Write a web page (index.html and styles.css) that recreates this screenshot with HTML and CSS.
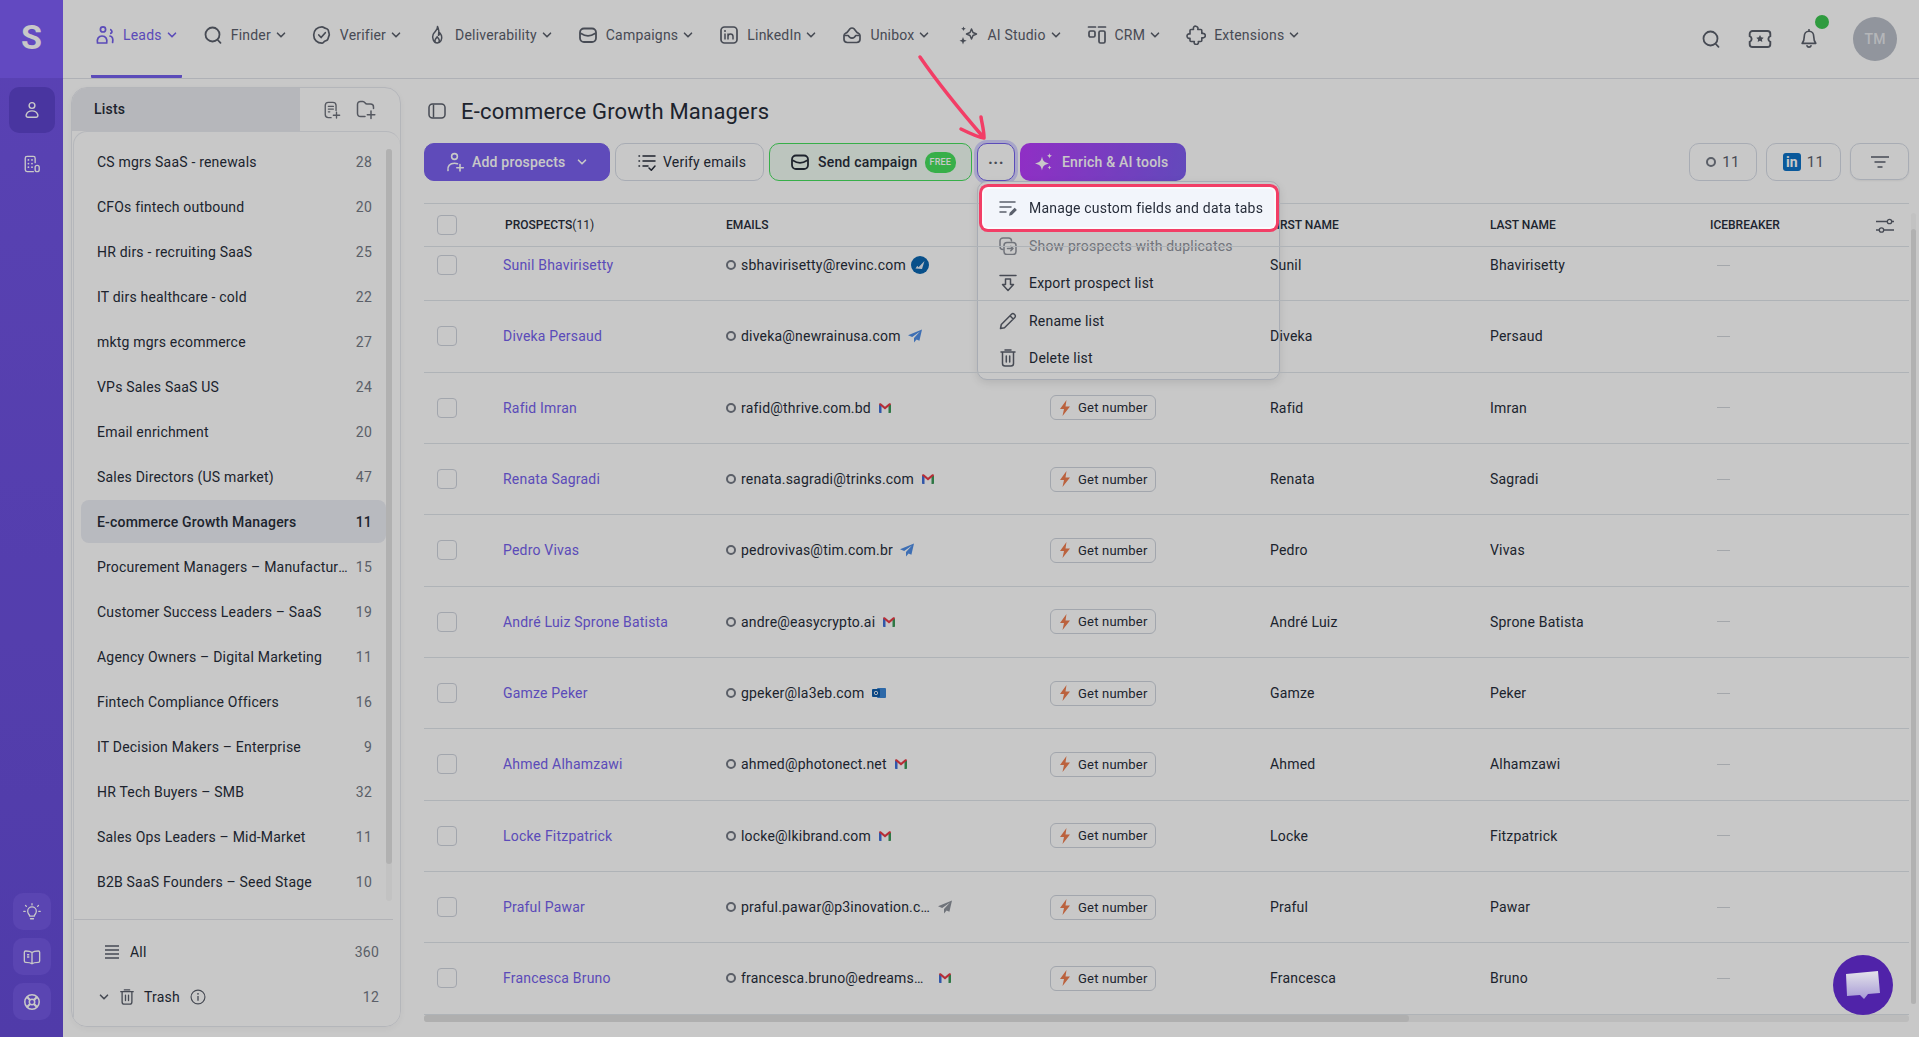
FILE: index.html
```html
<!DOCTYPE html>
<html lang="en">
<head>
<meta charset="UTF-8">
<meta name="viewport" content="width=device-width, initial-scale=1.0">
<title>Prospects</title>
<link rel="stylesheet" href="styles.css">
</head>
<body>

<!-- icon sprite -->
<svg class="sprite" xmlns="http://www.w3.org/2000/svg">
  <symbol id="i-chev" viewBox="0 0 10 10"><path d="M1.5 3.2 5 6.8l3.5-3.6" fill="none" stroke="currentColor" stroke-width="1.6" stroke-linecap="round" stroke-linejoin="round"/></symbol>
  <symbol id="i-leads" viewBox="0 0 20 20"><g fill="none" stroke="currentColor" stroke-width="1.7"><circle cx="8" cy="4.4" r="2.6"/><path d="M2.5 18c-.9-3.800 1-7 4.500-7 3.800 0 5.500 3 4.700 7z"/><path d="M15 8.500a1.900 1.900 0 1 0 0-3.800"/><path d="M15 11c2.500.3 3.300 3 2.600 6.500" stroke-linecap="round"/></g></symbol>
  <symbol id="i-search" viewBox="0 0 20 20"><g fill="none" stroke="currentColor" stroke-width="1.800" stroke-linecap="round"><circle cx="9.500" cy="9.500" r="7"/><path d="m14.800 15 2.700 2.800"/></g></symbol>
  <symbol id="i-check" viewBox="0 0 20 20"><g fill="none" stroke="currentColor" stroke-width="1.700" stroke-linecap="round" stroke-linejoin="round"><path d="M10 1.800c1.500 0 1.800 1 3 1.300 1.300.3 2.500.6 3.100 1.800.6 1.200.3 2 .9 3.100.5 1.100.3 2.500-.3 3.600-.5 1.100-.4 2-1.100 3-.8 1-1.900 1-3 1.700-1 .6-1.400 1.900-2.600 1.900-4.800 0-8.300-3.600-8.300-8.200s3.500-8.200 8.300-8.200z"/><path d="m6.800 10 2.300 2.500 4.200-4.800"/></g></symbol>
  <symbol id="i-flame" viewBox="0 0 20 20"><path d="M10.500 1.500c.6 3-3 5-4.300 7.800-1.500 3.400.4 8.700 4 8.700 3.500 0 5.300-3.800 4.300-7.200-.4-1.300-1.200-2.500-2-3.300.1 1.400-.3 2.300-1 2.800.6-2.800.3-6.300-1-8.800zM10.200 18c-1.700 0-2.600-1.500-2.100-3 .4-1.200 1.500-2 2-3.200.9 1.100 2.100 2.300 2.200 3.700.1 1.300-.8 2.500-2.100 2.500z" fill="none" stroke="currentColor" stroke-width="1.500" stroke-linejoin="round"/></symbol>
  <symbol id="i-mail" viewBox="0 0 20 20"><g fill="none" stroke="currentColor" stroke-width="1.800" stroke-linejoin="round"><rect x="2" y="3.500" width="16" height="13.500" rx="4"/><path d="M2.500 8.200c2.500 1.500 5 2.700 7.500 2.700s5-1.200 7.500-2.700"/></g></symbol>
  <symbol id="i-linkedin" viewBox="0 0 20 20"><rect x="2" y="2" width="16" height="16" rx="3.500" fill="none" stroke="currentColor" stroke-width="1.700"/><path d="M6 8.500v6M9 14.500v-6M9 11.500c0-3.500 5-3.500 5 0v3" fill="none" stroke="currentColor" stroke-width="1.500"/><circle cx="6" cy="6" r="1" fill="currentColor"/></symbol>
  <symbol id="i-inbox" viewBox="0 0 20 20"><g fill="none" stroke="currentColor" stroke-width="1.700" stroke-linejoin="round"><path d="M5 7.500 8 3.800c1-1.100 3-1.100 4 0L15 7.500c1.500 1 3 1.400 3 3v3.800c0 2-1.500 3.200-3.400 3.200H5.400C3.500 17.500 2 16.300 2 14.300v-3.800c0-1.600 1.500-2 3-3z"/><path d="M2.300 10.500h4c.8 2 1.900 2.600 3.700 2.600s2.900-.6 3.700-2.600h4"/></g></symbol>
  <symbol id="i-sparkle" viewBox="0 0 20 20"><g fill="none" stroke="currentColor" stroke-width="1.500" stroke-linejoin="round"><path d="m12.500 4 1.500 3.500L17.500 9 14 10.500 12.500 14 11 10.500 7.500 9 11 7.500z"/></g><path d="m4 12 1 2.700 2.700 1L5 16.800 4 19.500 3 16.800.5 15.700 3 14.700zM4.500 1.500l.7 1.600 1.600.7-1.600.7-.7 1.600-.7-1.600-1.600-.7 1.600-.7z" fill="currentColor"/></symbol>
  <symbol id="i-crm" viewBox="0 0 20 20"><g fill="none" stroke="currentColor" stroke-width="1.700"><path d="M1.500 2h7M11.500 2h7" stroke-linecap="round"/><rect x="2" y="6" width="6" height="6" rx="1.500"/><rect x="12" y="6" width="6" height="12" rx="1.500"/></g></symbol>
  <symbol id="i-puzzle" viewBox="0 0 20 20"><path d="M7.500 4.500c-.6-2.500 1-3.500 2.300-3.300 1.500.2 2.600 1.400 2 3.300h3c.7 0 1 .4 1 1v3c2-.6 3.500.6 3.500 2.100s-1.500 2.700-3.500 2.100v2.800c0 .7-.4 1-1 1h-2.500c.5 2-.7 3-2 3s-2.600-1-2-3H5c-.6 0-1-.4-1-1v-2.300c-2 .6-3-.8-3-2.100s1-2.700 3-2.100V5.500c0-.7.400-1 1-1z" fill="none" stroke="currentColor" stroke-width="1.600" stroke-linejoin="round"/></symbol>
  <symbol id="i-ticket" viewBox="0 0 24 20"><path d="M4.500 2h15c1.600 0 2.800 1.200 2.800 2.800v2.400a3 3 0 0 0 0 5.600v2.400c0 1.600-1.200 2.800-2.800 2.800h-15c-1.600 0-2.800-1.200-2.800-2.800v-2.400a3 3 0 0 0 0-5.600V4.800C1.700 3.200 2.900 2 4.500 2z" fill="none" stroke="currentColor" stroke-width="1.900"/><path d="m12 6 1.200 2.300 2.500.4-1.800 1.800.4 2.500-2.300-1.200-2.300 1.200.4-2.500-1.800-1.800 2.500-.4z" fill="currentColor"/></symbol>
  <symbol id="i-bell" viewBox="0 0 20 22"><path d="M10 2.500c-3.400 0-5.200 2.700-5.200 5.800 0 3.700-.8 5.700-2.300 7.500h15c-1.500-1.800-2.300-3.800-2.300-7.500 0-3.100-1.800-5.800-5.200-5.800zM10 .8v1.700M7.800 18.500c.5 2 3.900 2 4.400 0" fill="none" stroke="currentColor" stroke-width="1.800" stroke-linejoin="round" stroke-linecap="round"/></symbol>
  <symbol id="i-person" viewBox="0 0 20 20"><g fill="none" stroke="currentColor" stroke-width="1.600"><circle cx="10" cy="5" r="3.200"/><path d="M5.200 18c-1.700 0-2-1.600-1.500-3 .9-2.400 3.300-4 6.300-4s5.400 1.600 6.300 4c.5 1.400.2 3-1.500 3z"/></g></symbol>
  <symbol id="i-building" viewBox="0 0 20 20"><g fill="none" stroke="currentColor" stroke-width="1.500" stroke-linecap="round"><path d="M11.500 18.500H4.500c-1.200 0-2-.8-2-2V3.500c0-1.200.8-2 2-2h7c1.200 0 2 .8 2 2v5"/><path d="M6 5.500h.01M10 5.500h.01M6 9.500h.01M10 9.500h.01M6 13.500h.01M10 13.500h.01" stroke-width="2"/><rect x="13.500" y="11.500" width="4.500" height="7" rx="2.200"/></g></symbol>
  <symbol id="i-bulb" viewBox="0 0 20 20"><g fill="none" stroke="currentColor" stroke-width="1.400" stroke-linecap="round"><path d="M7.500 14.500c0-1.500-2.300-2.300-2.300-5.300a4.800 4.800 0 0 1 9.600 0c0 3-2.300 3.800-2.300 5.300z"/><path d="M8.300 17.500h3.400M10 .8v1.400M2.800 2.800l1 1M17.200 2.800l-1 1M.8 9.200h1.700M17.500 9.200h1.700"/></g></symbol>
  <symbol id="i-book" viewBox="0 0 20 20"><g fill="none" stroke="currentColor" stroke-width="1.500" stroke-linejoin="round"><path d="M10 5c-1.500-1.300-3.500-1.700-7-1.700-.8 0-1.500.6-1.500 1.500v9.700c0 .9.700 1.500 1.500 1.500 3.500 0 5.500.3 7 1.500 1.500-1.200 3.500-1.500 7-1.500.8 0 1.500-.6 1.500-1.500V4.800c0-.9-.7-1.500-1.500-1.500-3.500 0-5.500.4-7 1.700zM10 5v12"/><path d="M4.500 7.500h2.500M4.500 10h2.500"/></g></symbol>
  <symbol id="i-help" viewBox="0 0 20 20"><g fill="none" stroke="currentColor" stroke-width="1.700"><circle cx="10" cy="10" r="8"/><circle cx="10" cy="10" r="3"/><path d="m4.500 4.500 3.300 3.300M15.500 4.500l-3.300 3.300M4.500 15.500l3.300-3.300M15.500 15.500l-3.300-3.300" stroke-width="2.400"/></g></symbol>
  <symbol id="i-list-add" viewBox="0 0 20 20"><g fill="none" stroke="currentColor" stroke-width="1.500" stroke-linecap="round" stroke-linejoin="round"><path d="M9 18.500H6c-2 0-3.500-1.500-3.500-3.500V5C2.500 3 4 1.500 6 1.500h5c2 0 3.500 1.500 3.500 3.500v5.500"/><path d="M6 6h5.500M6 9h5.500M6 12h1.500M15 12.500v6.500M11.500 15.800h7"/></g></symbol>
  <symbol id="i-folder-add" viewBox="0 0 20 20"><g fill="none" stroke="currentColor" stroke-width="1.500" stroke-linecap="round" stroke-linejoin="round"><path d="M9 16.500H4.500c-1.800 0-3-1.200-3-3v-9c0-1.800 1.200-3 3-3h2.300c1 0 1.600.4 2.200 1.300.5.700 1 1.200 2 1.200h3.500c1.800 0 3 1.200 3 3v1.500"/><path d="M15 11v7.500M11.300 14.800h7.500"/></g></symbol>
  <symbol id="i-panel" viewBox="0 0 18 16"><g fill="none" stroke="currentColor" stroke-width="1.500"><rect x="1" y="1" width="16" height="14" rx="3.500"/><path d="M5.500 1.500v13"/></g></symbol>
  <symbol id="i-add-user" viewBox="0 0 20 20"><g fill="none" stroke="currentColor" stroke-width="1.600" stroke-linecap="round"><circle cx="9.500" cy="4.500" r="2.900"/><path d="M3 18.500c-.8-4.300 1.800-7.300 6.500-7.300 1.200 0 2.200.2 3 .5M15 12.500v6.500M11.800 15.800h6.500"/></g></symbol>
  <symbol id="i-verify" viewBox="0 0 20 20"><g fill="none" stroke="currentColor" stroke-width="1.500" stroke-linecap="round" stroke-linejoin="round"><path d="M2 4h.5M6 4h12M2 9h.5M6 9h12M2 14h.5M6 14h5"/><path d="m12 16 2.300 2.300L18 14"/></g></symbol>
  <symbol id="i-stars" viewBox="0 0 20 20"><path d="M8 4.500c.8 4.500 2.300 6 7 7-4.700 1-6.200 2.500-7 7-.8-4.500-2.300-6-7-7 4.700-1 6.200-2.500 7-7zM15.500 1c.3 1.800.9 2.400 2.800 2.800-1.900.4-2.500 1-2.800 2.800-.3-1.800-.9-2.400-2.800-2.800 1.900-.4 2.500-1 2.800-2.800zM15.500 13.500c.3 1.300.7 1.700 2 2-1.300.3-1.700.7-2 2-.3-1.300-.7-1.700-2-2 1.300-.3 1.700-.7 2-2z" fill="currentColor"/></symbol>
  <symbol id="i-filter" viewBox="0 0 18 12"><path d="M0 1h18M3.500 6h11M6.500 11h5" fill="none" stroke="currentColor" stroke-width="1.700"/></symbol>
  <symbol id="i-sliders" viewBox="0 0 18 16"><g fill="none" stroke="currentColor" stroke-width="1.300"><path d="M0 3.500h11M16 3.500h2M0 12h3M8 12h10"/><circle cx="13.500" cy="3.500" r="2.200"/><circle cx="5.500" cy="12" r="2.200"/></g></symbol>
  <symbol id="i-edit-list" viewBox="0 0 18 18"><g fill="none" stroke="currentColor" stroke-width="1.500" stroke-linecap="round"><path d="M1 3h15M1 8h11M1 13h6"/></g><path d="m10 16.800.7-3 5-5 2.200 2.200-5 5z" fill="currentColor"/></symbol>
  <symbol id="i-dupes" viewBox="0 0 18 18"><g fill="none" stroke="currentColor" stroke-width="1.500" stroke-linejoin="round" stroke-linecap="round"><path d="M4 12.500c-1.600 0-3-1.100-3-3V4C1 2.200 2.400 1 4 1h5.500c1.700 0 3 1.200 3 3"/><rect x="5" y="5.500" width="12" height="12" rx="3"/><path d="M8.500 11.500h5.500M11.800 9.300l2.200 2.200-2.200 2.200"/></g></symbol>
  <symbol id="i-export" viewBox="0 0 18 18"><path d="M1 1.500h16M6.500 5h5v5.500h3L9 16.500 3.500 10.500h3z" fill="none" stroke="currentColor" stroke-width="1.500" stroke-linejoin="round" stroke-linecap="round"/></symbol>
  <symbol id="i-pencil" viewBox="0 0 18 18"><path d="M1.500 16.500l.8-4L12.500 2.200c.8-.8 2-.8 2.800 0l.5.500c.8.8.8 2 0 2.800L5.500 15.700zM11 3.800 14.200 7" fill="none" stroke="currentColor" stroke-width="1.500" stroke-linejoin="round"/></symbol>
  <symbol id="i-trash" viewBox="0 0 16 18"><path d="M1 3h14M5 1h6M2.500 3v11.500c0 1.500 1 2.500 2.500 2.500h6c1.500 0 2.500-1 2.500-2.500V3M6.300 7v6M9.700 7v6" fill="none" stroke="currentColor" stroke-width="1.500" stroke-linecap="round"/></symbol>
  <symbol id="i-rows" viewBox="0 0 14 14"><path d="M0 1h14M0 5h14M0 9h14M0 13h14" fill="none" stroke="currentColor" stroke-width="1.500"/></symbol>
  <symbol id="i-info" viewBox="0 0 18 18"><g fill="none" stroke="currentColor" stroke-width="1.300"><circle cx="9" cy="9" r="7.800"/><path d="M9 8v5.200" stroke-width="1.500"/></g><circle cx="9" cy="5.400" r="1" fill="currentColor"/></symbol>
  <symbol id="i-bolt" viewBox="0 0 12 16"><path d="M7.500 0 1 9h4l-1.500 7L11 6.500H6.500z" fill="#ef7d4f"/></symbol>
  <symbol id="i-verified" viewBox="0 0 18 18"><circle cx="9" cy="9" r="9" fill="#0b66b0"/><path d="m4.500 12.500 1.800-2.800 1.200 1.500L13.500 5l-2.500 8z" fill="#e6edf6"/></symbol>
  <symbol id="i-plane" viewBox="0 0 14 14"><path d="M14 .5 0 6.300l4.200 1.800L12 2.500 6 9v4.500l2.600-3 2.800 1.300z" fill="currentColor"/></symbol>
  <symbol id="i-gmail" viewBox="0 0 12 10"><path d="M0 1.500h2.500V10H.8C.3 10 0 9.600 0 9.200z" fill="#3f6fd8"/><path d="M9.500 1.500H12v7.700c0 .4-.3.800-.8.800H9.500z" fill="#3c9a5a"/><path d="M0 1.500C0 .3 1.300-.2 2.100.5L6 3.700 9.900.5c.8-.7 2.100-.2 2.100 1L6 6.500z" fill="#ea3b46"/></symbol>
  <symbol id="i-outlook" viewBox="0 0 14 12"><rect x="5" y="1" width="9" height="10" rx="1" fill="#3b86d6"/><rect x="0" y="2" width="8" height="8" rx="1" fill="#0f5ba8"/><circle cx="4" cy="6" r="1.700" fill="none" stroke="#dfe8f3" stroke-width="1"/></symbol>
</svg>

<aside class="sidebar">
  <div class="logo">S</div>
  <div class="side-nav">
    <a class="side-btn active"><svg class="ico18"><use href="#i-person"/></svg></a>
    <a class="side-btn"><svg class="ico18"><use href="#i-building"/></svg></a>
  </div>
  <div class="side-bottom">
    <a class="side-help"><svg class="ico18"><use href="#i-bulb"/></svg></a>
    <a class="side-help"><svg class="ico18"><use href="#i-book"/></svg></a>
    <a class="side-help"><svg class="ico18"><use href="#i-help"/></svg></a>
  </div>
</aside>

<div class="main">
  <header class="topbar">
    <nav class="top-nav">
      <a class="nav-item active"><svg class="ico20"><use href="#i-leads"/></svg>Leads<svg class="chev"><use href="#i-chev"/></svg></a>
      <a class="nav-item"><svg class="ico20"><use href="#i-search"/></svg>Finder<svg class="chev"><use href="#i-chev"/></svg></a>
      <a class="nav-item"><svg class="ico20"><use href="#i-check"/></svg>Verifier<svg class="chev"><use href="#i-chev"/></svg></a>
      <a class="nav-item"><svg class="ico20"><use href="#i-flame"/></svg>Deliverability<svg class="chev"><use href="#i-chev"/></svg></a>
      <a class="nav-item"><svg class="ico20"><use href="#i-mail"/></svg>Campaigns<svg class="chev"><use href="#i-chev"/></svg></a>
      <a class="nav-item"><svg class="ico20"><use href="#i-linkedin"/></svg>LinkedIn<svg class="chev"><use href="#i-chev"/></svg></a>
      <a class="nav-item"><svg class="ico20"><use href="#i-inbox"/></svg>Unibox<svg class="chev"><use href="#i-chev"/></svg></a>
      <a class="nav-item nav-ai"><svg class="ico20"><use href="#i-sparkle"/></svg>AI Studio<svg class="chev"><use href="#i-chev"/></svg></a>
      <a class="nav-item"><svg class="ico20"><use href="#i-crm"/></svg>CRM<svg class="chev"><use href="#i-chev"/></svg></a>
      <a class="nav-item"><svg class="ico20"><use href="#i-puzzle"/></svg>Extensions<svg class="chev"><use href="#i-chev"/></svg></a>
    </nav>
    <div class="top-right">
      <a class="top-icon"><svg class="ico20"><use href="#i-search"/></svg></a>
      <a class="top-icon"><svg class="ico24"><use href="#i-ticket"/></svg></a>
      <a class="top-icon bell"><svg class="ico20"><use href="#i-bell"/></svg><span class="bell-dot"></span></a>
      <div class="avatar">TM</div>
    </div>
  </header>

  <div class="content">
    <section class="lists-panel">
      <div class="lists-head">
        <div class="lists-tab">Lists</div>
        <a class="head-icon"><svg class="ico18"><use href="#i-list-add"/></svg></a>
        <a class="head-icon"><svg class="ico20"><use href="#i-folder-add"/></svg></a>
      </div>
      <div class="lists-card">
        <div class="lists-scroll">
          <ul class="lists">
            <li><span class="list-name">CS mgrs SaaS - renewals</span><span class="list-count">28</span></li>
            <li><span class="list-name">CFOs fintech outbound</span><span class="list-count">20</span></li>
            <li><span class="list-name">HR dirs - recruiting SaaS</span><span class="list-count">25</span></li>
            <li><span class="list-name">IT dirs healthcare - cold</span><span class="list-count">22</span></li>
            <li><span class="list-name">mktg mgrs ecommerce</span><span class="list-count">27</span></li>
            <li><span class="list-name">VPs Sales SaaS US</span><span class="list-count">24</span></li>
            <li><span class="list-name">Email enrichment</span><span class="list-count">20</span></li>
            <li><span class="list-name">Sales Directors (US market)</span><span class="list-count">47</span></li>
            <li class="selected"><span class="list-name">E-commerce Growth Managers</span><span class="list-count">11</span></li>
            <li><span class="list-name">Procurement Managers – Manufacturing</span><span class="list-count">15</span></li>
            <li><span class="list-name">Customer Success Leaders – SaaS</span><span class="list-count">19</span></li>
            <li><span class="list-name">Agency Owners – Digital Marketing</span><span class="list-count">11</span></li>
            <li><span class="list-name">Fintech Compliance Officers</span><span class="list-count">16</span></li>
            <li><span class="list-name">IT Decision Makers – Enterprise</span><span class="list-count">9</span></li>
            <li><span class="list-name">HR Tech Buyers – SMB</span><span class="list-count">32</span></li>
            <li><span class="list-name">Sales Ops Leaders – Mid-Market</span><span class="list-count">11</span></li>
            <li><span class="list-name">B2B SaaS Founders – Seed Stage</span><span class="list-count">10</span></li>
          </ul>
          <div class="lists-bar"><div class="lists-thumb"></div></div>
        </div>
        <div class="lists-foot">
          <div class="foot-row foot-all"><svg class="ico14"><use href="#i-rows"/></svg><span class="foot-label">All</span><span class="foot-count">360</span></div>
          <div class="foot-row foot-trash"><svg class="chev"><use href="#i-chev"/></svg><svg class="ico16"><use href="#i-trash"/></svg><span>Trash</span><svg class="ico16 foot-info"><use href="#i-info"/></svg><span class="foot-count">12</span></div>
        </div>
      </div>
    </section>

    <section class="prospects">
      <div class="title-row">
        <svg class="title-icon"><use href="#i-panel"/></svg>
        <h1>E-commerce Growth Managers</h1>
      </div>

      <div class="toolbar">
        <button class="btn btn-primary"><svg class="ico20"><use href="#i-add-user"/></svg>Add prospects<svg class="chev chev-btn"><use href="#i-chev"/></svg></button>
        <button class="btn btn-verify"><svg class="ico20"><use href="#i-verify"/></svg>Verify emails</button>
        <button class="btn btn-send"><svg class="ico20"><use href="#i-mail"/></svg>Send campaign<span class="free">FREE</span></button>
        <div class="more-wrap">
          <button class="btn btn-more">···</button>
          <div class="menu">
            <div class="menu-item highlight"><svg class="ico18"><use href="#i-edit-list"/></svg>Manage custom fields and data tabs</div>
            <div class="menu-item disabled"><svg class="ico18"><use href="#i-dupes"/></svg>Show prospects with duplicates</div>
            <div class="menu-item"><svg class="ico18"><use href="#i-export"/></svg>Export prospect list</div>
            <div class="menu-item"><svg class="ico18"><use href="#i-pencil"/></svg>Rename list</div>
            <div class="menu-item"><svg class="ico18"><use href="#i-trash"/></svg>Delete list</div>
          </div>
        </div>
        <button class="btn btn-enrich"><svg class="ico20"><use href="#i-stars"/></svg>Enrich &amp; AI tools</button>
        <button class="btn btn-count count-email"><span class="status"></span>11</button>
        <button class="btn btn-count count-li"><span class="li-logo">in</span>11</button>
        <button class="btn btn-filter"><svg class="filter-ico"><use href="#i-filter"/></svg></button>
      </div>

      <div class="table">
        <div class="thead row-grid">
          <span class="check"></span>
          <span class="th-first">PROSPECTS<em>(11)</em></span>
          <span>EMAILS</span>
          <span></span>
          <span>FIRST NAME</span>
          <span>LAST NAME</span>
          <span>ICEBREAKER</span>
          <svg class="sliders"><use href="#i-sliders"/></svg>
        </div>
        <div class="tbody">
          <div class="row row-grid"><span class="check"></span><a class="name">Sunil Bhavirisetty</a><span class="email"><span class="status"></span><span class="addr">sbhavirisetty@revinc.com</span><svg class="ico18 m-verified"><use href="#i-verified"/></svg></span><span></span><span>Sunil</span><span>Bhavirisetty</span><span class="dash"></span></div>
          <div class="row row-grid"><span class="check"></span><a class="name">Diveka Persaud</a><span class="email"><span class="status"></span><span class="addr">diveka@newrainusa.com</span><svg class="ico14 m-plane"><use href="#i-plane"/></svg></span><span></span><span>Diveka</span><span>Persaud</span><span class="dash"></span></div>
          <div class="row row-grid"><span class="check"></span><a class="name">Rafid Imran</a><span class="email"><span class="status"></span><span class="addr">rafid@thrive.com.bd</span><svg class="m-gmail"><use href="#i-gmail"/></svg></span><a class="get-num"><svg class="bolt"><use href="#i-bolt"/></svg>Get number</a><span>Rafid</span><span>Imran</span><span class="dash"></span></div>
          <div class="row row-grid"><span class="check"></span><a class="name">Renata Sagradi</a><span class="email"><span class="status"></span><span class="addr">renata.sagradi@trinks.com</span><svg class="m-gmail"><use href="#i-gmail"/></svg></span><a class="get-num"><svg class="bolt"><use href="#i-bolt"/></svg>Get number</a><span>Renata</span><span>Sagradi</span><span class="dash"></span></div>
          <div class="row row-grid"><span class="check"></span><a class="name">Pedro Vivas</a><span class="email"><span class="status"></span><span class="addr">pedrovivas@tim.com.br</span><svg class="ico14 m-plane"><use href="#i-plane"/></svg></span><a class="get-num"><svg class="bolt"><use href="#i-bolt"/></svg>Get number</a><span>Pedro</span><span>Vivas</span><span class="dash"></span></div>
          <div class="row row-grid"><span class="check"></span><a class="name">André Luiz Sprone Batista</a><span class="email"><span class="status"></span><span class="addr">andre@easycrypto.ai</span><svg class="m-gmail"><use href="#i-gmail"/></svg></span><a class="get-num"><svg class="bolt"><use href="#i-bolt"/></svg>Get number</a><span>André Luiz</span><span>Sprone Batista</span><span class="dash"></span></div>
          <div class="row row-grid"><span class="check"></span><a class="name">Gamze Peker</a><span class="email"><span class="status"></span><span class="addr">gpeker@la3eb.com</span><svg class="m-outlook"><use href="#i-outlook"/></svg></span><a class="get-num"><svg class="bolt"><use href="#i-bolt"/></svg>Get number</a><span>Gamze</span><span>Peker</span><span class="dash"></span></div>
          <div class="row row-grid"><span class="check"></span><a class="name">Ahmed Alhamzawi</a><span class="email"><span class="status"></span><span class="addr">ahmed@photonect.net</span><svg class="m-gmail"><use href="#i-gmail"/></svg></span><a class="get-num"><svg class="bolt"><use href="#i-bolt"/></svg>Get number</a><span>Ahmed</span><span>Alhamzawi</span><span class="dash"></span></div>
          <div class="row row-grid"><span class="check"></span><a class="name">Locke Fitzpatrick</a><span class="email"><span class="status"></span><span class="addr">locke@lkibrand.com</span><svg class="m-gmail"><use href="#i-gmail"/></svg></span><a class="get-num"><svg class="bolt"><use href="#i-bolt"/></svg>Get number</a><span>Locke</span><span>Fitzpatrick</span><span class="dash"></span></div>
          <div class="row row-grid"><span class="check"></span><a class="name">Praful Pawar</a><span class="email"><span class="status"></span><span class="addr">praful.pawar@p3inovation.com</span><svg class="ico14 m-plane gray"><use href="#i-plane"/></svg></span><a class="get-num"><svg class="bolt"><use href="#i-bolt"/></svg>Get number</a><span>Praful</span><span>Pawar</span><span class="dash"></span></div>
          <div class="row row-grid"><span class="check"></span><a class="name">Francesca Bruno</a><span class="email"><span class="status"></span><span class="addr">francesca.bruno@edreamsolutions.com</span><svg class="m-gmail"><use href="#i-gmail"/></svg></span><a class="get-num"><svg class="bolt"><use href="#i-bolt"/></svg>Get number</a><span>Francesca</span><span>Bruno</span><span class="dash"></span></div>
        </div>
        <div class="hbar"><div class="hthumb"></div></div>
        <div class="vbar"><div class="vthumb"></div></div>
      </div>
    </section>
  </div>
</div>

<div class="dim"></div>

<!-- annotation arrow over the dimmed page -->
<svg class="arrow" viewBox="0 0 80 100" width="80" height="100">
  <path d="M5 7C25 36 50 66 69 88M46 79C54 83 62 87 69 88C69 80 67 74 66 67" fill="none" stroke="#f23e66" stroke-width="3.500" stroke-linecap="round" stroke-linejoin="round"/>
</svg>

<a class="chat">
  <svg width="36" height="30" viewBox="0 0 36 30"><defs><linearGradient id="chat-fill" x1="0" y1="0" x2="0" y2="1"><stop offset="0" stop-color="#e4e4ea"/><stop offset="1" stop-color="#a79ad6"/></linearGradient></defs><path d="M1 4 33 1l2 22-12 1-4 5-4-4-13 1z" fill="url(#chat-fill)"/></svg>
</a>

</body>
</html>
```

FILE: styles.css
```css
* {
  box-sizing: border-box;
}

html, body {
  height: 100%;
}

body {
  margin: 0;
  height: 1037px;
  overflow: hidden;
  display: flex;
  font-family: Roboto, "Liberation Sans", sans-serif;
  font-size: 14px;
  letter-spacing: 0.2px;
  color: #272d3a;
  background: #fff;
}

ul {
  list-style: none;
  margin: 0;
  padding: 0;
}

button {
  font-family: inherit;
  letter-spacing: inherit;
  cursor: pointer;
}

.sprite {
  display: none;
}

.ico14 { width: 14px; height: 14px; flex: none; }
.ico16 { width: 16px; height: 16px; flex: none; }
.ico18 { width: 18px; height: 18px; flex: none; }
.ico20 { width: 20px; height: 20px; flex: none; }
.ico24 { width: 24px; height: 24px; flex: none; }
.chev { width: 10px; height: 10px; flex: none; }

/* left rail */
.sidebar {
  width: 63px;
  flex: none;
  display: flex;
  flex-direction: column;
  align-items: center;
  background: linear-gradient(180deg, #7355e5, #664cd8);
  color: #fff;
}

.logo {
  width: 100%;
  height: 78px;
  flex: none;
  display: flex;
  align-items: center;
  justify-content: center;
  background: #7d5df7;
  font-size: 34px;
  font-weight: 700;
  color: #fff;
  padding-bottom: 4px;
}

.side-nav {
  display: flex;
  flex-direction: column;
  gap: 8px;
  padding-top: 9px;
  flex: 1;
}

.side-btn {
  width: 46px;
  height: 46px;
  display: flex;
  align-items: center;
  justify-content: center;
  border-radius: 10px;
}

.side-btn.active {
  background: #5e44cc;
}

.side-bottom {
  display: flex;
  flex-direction: column;
  gap: 8px;
  padding-bottom: 17px;
}

.side-help {
  width: 38px;
  height: 37px;
  display: flex;
  align-items: center;
  justify-content: center;
  border-radius: 10px;
  background: #7358e3;
}

.main {
  flex: 1;
  min-width: 0;
  display: flex;
  flex-direction: column;
}

/* top bar */
.topbar {
  height: 79px;
  flex: none;
  display: flex;
  align-items: stretch;
  border-bottom: 1px solid #dfe2e8;
  padding-right: 22px;
}

.top-nav {
  display: flex;
  gap: 17px;
  padding-left: 28px;
}

.nav-item {
  display: flex;
  align-items: center;
  gap: 8px;
  padding: 0 5px 6px 4px;
  height: 78px;
  color: #5b606c;
  border-bottom: 3px solid transparent;
}

.nav-item .chev {
  margin-left: -3px;
}

.nav-item.active {
  color: #7460ec;
  border-bottom-color: #7460ec;
  border-radius: 0 0 1px 1px;
}

.nav-ai {
  margin-left: 4px;
}

.top-right {
  margin-left: auto;
  display: flex;
  align-items: center;
  gap: 25px;
  color: #5b606c;
}

.top-icon {
  width: 24px;
  height: 24px;
  display: flex;
  align-items: center;
  justify-content: center;
  position: relative;
}

.bell-dot {
  position: absolute;
  top: -12px;
  left: 18px;
  width: 14px;
  height: 14px;
  border-radius: 50%;
  background: #3dc651;
}

.avatar {
  width: 44px;
  height: 44px;
  margin-left: 7px;
  border-radius: 50%;
  background: #b9bec8;
  color: #e6e8ec;
  font-weight: 500;
  font-size: 14px;
  display: flex;
  align-items: center;
  justify-content: center;
}

.content {
  flex: 1;
  min-height: 0;
  display: flex;
  padding: 8px 10px 0 8px;
}

/* lists panel */
.lists-panel {
  width: 330px;
  height: 940px;
  flex: none;
  display: flex;
  flex-direction: column;
  border: 1px solid #e6e8ee;
  border-radius: 16px;
  box-shadow: 0 2px 6px rgba(0, 0, 0, 0.04);
  overflow: hidden;
}

.lists-head {
  height: 43px;
  flex: none;
  display: flex;
  align-items: center;
  gap: 15px;
  padding-right: 24px;
  position: relative;
}

.lists-tab {
  flex: 1;
  align-self: stretch;
  margin-right: 8px;
  padding-left: 22px;
  display: flex;
  align-items: center;
  font-weight: 500;
  background: #e9eaef;
  clip-path: polygon(0 0, 229px 0, 234px 5px, 238px 13px, 243px 26px, 249px 36px, 258px 43px, 0 43px);
  padding-bottom: 1px;
}

.head-icon {
  color: #6d717b;
  display: flex;
}

.lists-card {
  flex: 1;
  min-height: 0;
  margin: 0 0 0 1px;
  display: flex;
  flex-direction: column;
  background: #fff;
  border: 1px solid #e9ebf0;
  border-width: 1px 0 0 1px;
  border-radius: 14px 14px 0 0;
}

.lists-scroll {
  height: 788px;
  flex: none;
  position: relative;
  overflow: hidden;
  padding: 8px 0 0 7px;
  border-bottom: 1px solid #e3e5ea;
  margin-right: 7px;
}

.lists li {
  width: 305px;
  height: 43px;
  margin-bottom: 2.06px;
  padding: 0 14px 0 16px;
  display: flex;
  align-items: center;
  justify-content: space-between;
  border-radius: 8px;
}

.lists li.selected {
  background: #ebedf4;
  font-weight: 500;
}

.list-name {
  width: 252px;
  white-space: nowrap;
  overflow: hidden;
  text-overflow: ellipsis;
}

.list-count {
  color: #747a85;
}

.selected .list-count {
  color: #272d3a;
}

.lists-bar {
  position: absolute;
  top: 17px;
  left: 312px;
  width: 6px;
  height: 752px;
  border-radius: 3px;
  background: #f8f8f8;
}

.lists-thumb {
  height: 715px;
  border-radius: 3px;
  background: #e2e2e2;
}

.lists-foot {
  flex: 1;
  padding: 9px 21px 0 0;
}

.foot-row {
  height: 45px;
  display: flex;
  align-items: center;
}

.foot-all {
  padding-left: 31px;
  gap: 11px;
  color: #272d3a;
}

.foot-all svg {
  color: #5b606c;
}

.foot-trash {
  padding-left: 25px;
}

.foot-trash .chev {
  color: #5b606c;
  margin-right: 10px;
}

.foot-trash .ico16 {
  color: #5b606c;
  margin-right: 9px;
}

.foot-trash .foot-info {
  margin: 0 0 0 10px;
}

.foot-count {
  margin-left: auto;
  color: #747a85;
}

/* main table area */
.prospects {
  flex: 1;
  min-width: 0;
  margin-left: 23px;
  position: relative;
}

.title-row {
  height: 40px;
  margin: 4px 0 12px;
  display: flex;
  align-items: center;
  gap: 15px;
  padding-left: 4px;
}

.title-icon {
  width: 18px;
  height: 16px;
  color: #5b606c;
}

.title-row h1 {
  margin: 0;
  font-size: 22px;
  font-weight: 400;
  color: #272d3a;
}

.toolbar {
  display: flex;
  align-items: stretch;
  height: 38px;
  gap: 5px;
  margin-bottom: 22px;
}

.btn {
  height: 38px;
  display: flex;
  align-items: center;
  padding: 0;
  border: 1px solid #d7dce6;
  border-radius: 10px;
  background: #fff;
  color: #272d3a;
  font-size: 14px;
}

.btn-primary {
  width: 186px;
  padding-left: 20px;
  gap: 7px;
  background: #7960ee;
  border-color: #7960ee;
  color: #fff;
  font-weight: 500;
}

.chev-btn {
  margin-left: 5px;
}

.btn-verify {
  width: 149px;
  padding-left: 21px;
  gap: 6px;
}

.btn-send {
  width: 203px;
  padding-left: 20px;
  gap: 8px;
  background: #f0fbf2;
  border-color: #47e05e;
  font-weight: 500;
}

.free {
  margin-left: -1px;
  padding: 0 5px;
  height: 21px;
  line-height: 20px;
  border-radius: 10px;
  background: #47e05e;
  color: #fff;
  font-size: 9px;
  font-weight: 500;
}

.more-wrap {
  position: relative;
  width: 38px;
}

.btn-more {
  width: 38px;
  justify-content: center;
  border-color: #7460ec;
  box-shadow: 0 0 0 3px #d7d4ff;
  font-size: 16px;
  color: #5b606c;
  letter-spacing: 0.5px;
  font-weight: 700;
}

.btn-enrich {
  width: 166px;
  padding-left: 14px;
  gap: 8px;
  border: 0;
  background: linear-gradient(100deg, #b83cfb, #7e5eef);
  color: #fff;
  font-weight: 500;
}

.btn-count {
  justify-content: center;
  color: #5b606c;
  gap: 6px;
  font-size: 15px;
}

.count-email {
  width: 68px;
  margin-left: auto;
}

.count-li {
  width: 75px;
  margin-left: 4px;
}

.btn-filter {
  width: 59px;
  margin-left: 4px;
  height: 37px;
  justify-content: center;
  box-shadow: 0 1px 2px rgba(0, 0, 0, 0.06);
  color: #5b606c;
}

.filter-ico {
  width: 18px;
  height: 12px;
}

.li-logo {
  width: 18px;
  height: 18px;
  border-radius: 3px;
  background: #0d72c6;
  color: #fff;
  font-size: 14px;
  font-weight: 700;
  letter-spacing: 0;
  line-height: 19px;
  text-align: center;
}

/* dropdown */
.menu {
  position: absolute;
  top: 38px;
  left: 0;
  width: 303px;
  height: 199px;
  padding: 7px 5px 0 6px;
  background: #fff;
  border: 1px solid #d7dce6;
  border-radius: 10px;
  box-shadow: 0 3px 8px rgba(0, 0, 0, 0.1);
}

.menu-item {
  height: 37.5px;
  display: flex;
  align-items: center;
  gap: 12px;
  padding-left: 15px;
  white-space: nowrap;
  color: #272d3a;
  font-weight: 400;
}

.menu-item svg {
  color: #5b606c;
}

.menu-item.disabled,
.menu-item.disabled svg {
  color: #90949d;
}

.menu-item.highlight {
  position: relative;
  z-index: 11;
  height: 38px;
  background: #f2f5fb;
  border-radius: 4px;
  box-shadow: 0 0 0 2px #fbfbfd, 0 0 0 5px #f23e66;
}

/* table */
.table {
  position: relative;
}

.row-grid {
  display: grid;
  grid-template-columns: 79px 223px 324px 220px 220px 220px 1fr;
  align-items: center;
}

.thead {
  height: 44px;
  border-top: 1px solid #e0e4ea;
  border-bottom: 1px solid #e0e4ea;
  font-size: 12px;
  font-weight: 500;
  position: relative;
  letter-spacing: 0;
  color: #272d3a;
}

.th-first {
  padding-left: 2px;
}

.th-first em {
  font-style: normal;
  font-weight: 400;
}

.check {
  width: 20px;
  height: 20px;
  margin-left: 13px;
  border: 1px solid #cfd4dd;
  border-radius: 4px;
  background: #fff;
}

.sliders {
  position: absolute;
  right: 15px;
  top: 14px;
  width: 18px;
  height: 16px;
  color: #5b606c;
}

.tbody {
  height: 768px;
  overflow: hidden;
}

.row {
  height: 71.33px;
  border-bottom: 1px solid #e0e4ea;
}

.row:first-child {
  margin-top: -17px;
}

.name {
  color: #7460ec;
}

.email {
  display: flex;
  align-items: center;
}

.status {
  width: 10px;
  height: 10px;
  flex: none;
  border: 2px solid #747a85;
  border-radius: 50%;
  margin-right: 5px;
}

.btn-count .status {
  margin-right: 0;
}

.addr {
  max-width: 190px;
  white-space: nowrap;
  overflow: hidden;
  text-overflow: ellipsis;
}

.m-verified {
  margin-left: 5px;
}

.m-plane {
  margin-left: 7px;
  color: #4f8ee6;
}

.m-plane.gray {
  color: #8e939c;
}

.m-gmail {
  width: 12px;
  height: 10px;
  margin-left: 8px;
}

.m-outlook {
  width: 14px;
  height: 12px;
  margin-left: 7px;
}

.get-num {
  width: 106px;
  height: 25px;
  display: flex;
  align-items: center;
  gap: 7px;
  padding-left: 8px;
  border: 1px solid #cfd4dd;
  border-radius: 6px;
  font-size: 13px;
}

.bolt {
  width: 12px;
  height: 16px;
}

.dash {
  width: 13px;
  height: 1px;
  margin-left: 7px;
  background: #d2d5da;
}

.hbar {
  height: 7px;
  border-radius: 3px;
  background: #f0f0f0;
}

.hthumb {
  width: 985px;
  height: 7px;
  border-radius: 3px;
  background: #e0e0e0;
}

.vbar {
  position: absolute;
  top: 10px;
  left: calc(100% + 2px);
  width: 5px;
  height: 791px;
  border-radius: 3px;
  background: #f8f8f8;
}

.vthumb {
  margin-top: 16px;
  height: 775px;
  border-radius: 3px;
  background: #e2e2e2;
}

/* modal style dimming, only the highlight, arrow and chat sit above it */
.dim {
  position: fixed;
  inset: 0;
  z-index: 10;
  background: rgba(0, 0, 0, 0.215);
}

.arrow {
  position: fixed;
  left: 915px;
  top: 50px;
  z-index: 12;
}

.chat {
  position: fixed;
  left: 1833px;
  top: 955px;
  z-index: 12;
  width: 60px;
  height: 60px;
  border-radius: 50%;
  background: #5023a9;
  display: flex;
  align-items: center;
  justify-content: center;
}
```
